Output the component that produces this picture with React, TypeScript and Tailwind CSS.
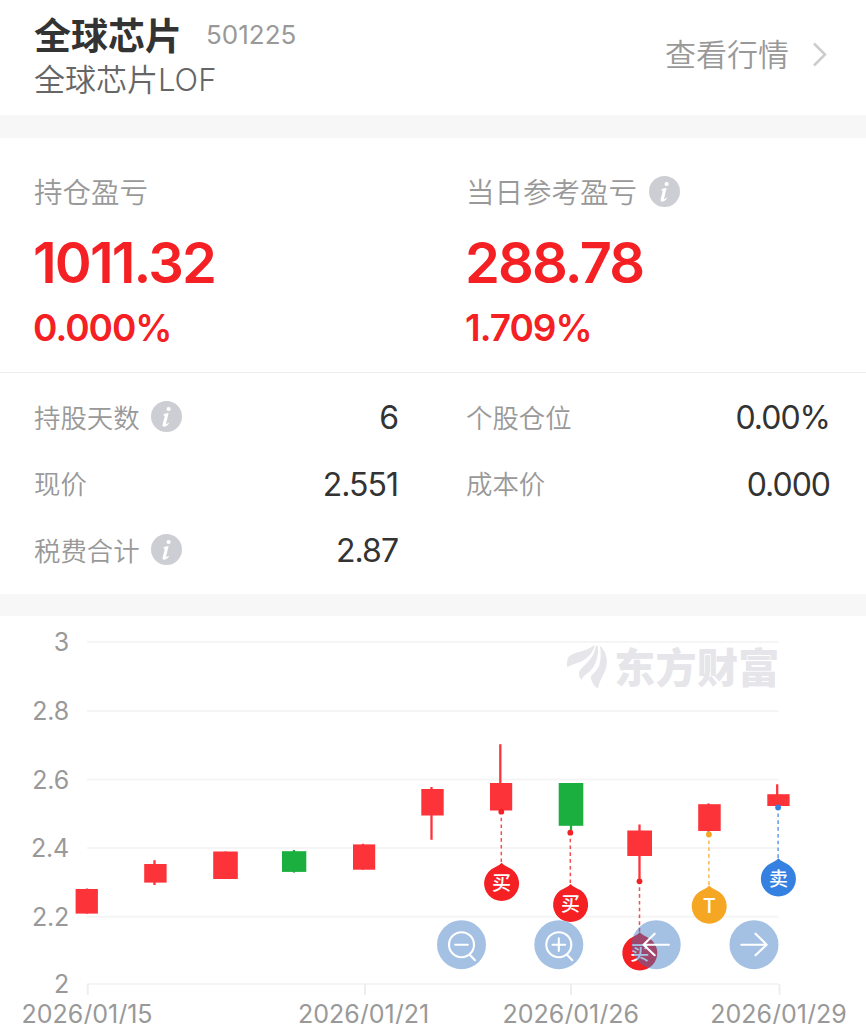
import type { ReactNode } from "react";

const RED = "#fd333a";
const GREEN = "#1aaf3f";

function InfoIcon() {
  return (
    <svg className="h-[31px] w-[31px] shrink-0" viewBox="0 0 31 31">
      <circle cx="15.5" cy="15.5" r="15.5" fill="#cdced3" />
      <circle cx="17.6" cy="8" r="2.1" fill="#fff" />
      <path
        d="M12.3 13.6C13.6 12.8 15.3 12.1 17.6 11.9L15.1 22.4C14.9 23.3 15.4 23.3 17.5 21.7L18 22.4C16.2 24.5 14.5 25.7 13.1 25.7C11.7 25.7 11.3 24.6 11.7 23L13.7 15.2C13.9 14.4 13.5 14.3 12.5 14.5Z"
        fill="#fff"
      />
    </svg>
  );
}

function Row({ label, info, value }: { label: string; info?: boolean; value?: string }) {
  return (
    <div className="flex h-[66.500px] items-center justify-between">
      <div className="flex items-center gap-[11px]">
        <span className="pt-[2px] text-[26.400px] leading-none font-[350] text-[#999]">{label}</span>
        {info && <InfoIcon />}
      </div>
      <span className="pt-[2.500px] text-[32px] leading-none tracking-[-1px] text-[#333]">{value}</span>
    </div>
  );
}

function Stat({ label, info, value, percent }: { label: string; info?: boolean; value: string; percent: string }) {
  return (
    <div className="flex flex-col items-start">
      <div className="flex h-[32px] items-center gap-[12px]">
        <span className="pt-[4px] text-[28.500px] leading-none font-[350] text-[#999]">{label}</span>
        {info && <InfoIcon />}
      </div>
      <div className="-ml-[1px] mt-[25px] text-[56px] leading-[60px] font-semibold tracking-[-1.850px]">{value}</div>
      <div className="-ml-[1px] mt-[13px] text-[37px] leading-[44px] font-semibold tracking-[-1px]">{percent}</div>
    </div>
  );
}

type Candle = { x: number; w: number; top: number; bottom: number; cx: number; high: number; low: number; up: boolean };

const candles: Candle[] = [
  { x: 75.6, w: 22.3, top: 889, bottom: 913.6, cx: 87, high: 888.5, low: 913.6, up: true },
  { x: 144.2, w: 22.4, top: 864, bottom: 882.6, cx: 154.5, high: 860.2, low: 885, up: true },
  { x: 213.2, w: 24.6, top: 851.5, bottom: 879, cx: 225.5, high: 851.5, low: 879, up: true },
  { x: 282, w: 24.3, top: 851.2, bottom: 871.9, cx: 294, high: 850, low: 872.6, up: false },
  { x: 353, w: 22.2, top: 844.4, bottom: 869.7, cx: 363, high: 843.8, low: 869.7, up: true },
  { x: 421.3, w: 22.4, top: 789, bottom: 815.5, cx: 431.5, high: 787, low: 839.8, up: true },
  { x: 490, w: 22.2, top: 783, bottom: 810.5, cx: 500.3, high: 744.2, low: 810.5, up: true },
  { x: 558.7, w: 24.6, top: 783, bottom: 825.8, cx: 571, high: 783, low: 830.5, up: false },
  { x: 627.3, w: 24.7, top: 830.5, bottom: 856, cx: 639.5, high: 824.5, low: 881, up: true },
  { x: 698.2, w: 22.5, top: 804.2, bottom: 831, cx: 708.5, high: 803.4, low: 831.8, up: true },
  { x: 767.3, w: 22.3, top: 794.2, bottom: 806, cx: 777.2, high: 784.3, low: 806, up: true },
];

const pins = [
  { x: 501.6, dot: 811.7, cy: 882.8, label: "买", size: 19, color: "#f42024" },
  { x: 570.6, dot: 832.7, cy: 903.9, label: "买", size: 19, color: "#f42024" },
  { x: 639.8, dot: 881.3, cy: 952.3, label: "买", size: 19, color: "#f42024" },
  { x: 709.2, dot: 834.5, cy: 905.5, label: "T", size: 20, color: "#f5a623" },
  { x: 778.4, dot: 807.5, cy: 878.2, label: "卖", size: 19, color: "#3581e2" },
];

const levels = [
  { y: 642, label: "3" },
  { y: 711, label: "2.8" },
  { y: 779.5, label: "2.6" },
  { y: 848, label: "2.4" },
  { y: 916.7, label: "2.2" },
  { y: 984, label: "2" },
];

const dates = [
  { tick: 87.7, x: 87, label: "2026/01/15" },
  { tick: 365, x: 363.5, label: "2026/01/21" },
  { tick: 571, x: 570.8, label: "2026/01/26" },
  { tick: 779.5, x: 778.5, label: "2026/01/29" },
];

function RoundButton({ x, children }: { x: number; children: ReactNode }) {
  return (
    <g transform={`translate(${x} 944.7)`} fill="none" stroke="#fff" strokeWidth="2.1" strokeLinecap="round" strokeLinejoin="round">
      <circle r="24.5" fill="#3676c4" fillOpacity="0.45" stroke="none" />
      {children}
    </g>
  );
}

function Chart() {
  return (
    <svg className="block h-[408px] w-[866px]" viewBox="0 616 866 408">
      {levels.map((l) => (
        <g key={l.label}>
          <path d={`M87 ${l.y}H778.5`} stroke="#f5f5f5" strokeWidth="2" />
          <text x="69" y={l.y + 9} textAnchor="end" fontSize="25" letterSpacing="-0.2" fill="#999">
            {l.label}
          </text>
        </g>
      ))}
      {dates.map((d) => (
        <g key={d.label}>
          <path d={`M${d.tick} 984V995`} stroke="#eeeeee" strokeWidth="2" />
          <text x={d.x} y="1023.3" textAnchor="middle" fontSize="25" fill="#999">
            {d.label}
          </text>
        </g>
      ))}

      <g fill="#e5e5ea">
        <path d="M567.3 667.5C566.8 663.5 567 659.5 568.3 657.3C573 651.5 585 652.5 594.5 645C593.5 652.5 587 659 580 662C575 664 570.5 664.5 567.3 667.5Z" />
        <path d="M581.5 680C579.5 678 578.7 675 579 672.3C581.5 666 594 660.5 595.7 646L597.5 645.7C598.8 652 597.5 661 592.7 668C589 673.5 583.5 674.5 581.5 680Z" />
        <path d="M599.8 645.7C604.5 649.5 607 656 606.9 662C606.5 673 600 677 598 688.5C594.5 686.5 591.5 682 590.7 677C592.5 673 597.5 671.5 599.5 664.5C601.3 658 601 651 599.8 645.7Z" />
        <text x="614.3" y="683" fontSize="41" fontWeight="900" letterSpacing="0.3">
          东方财富
        </text>
      </g>

      {candles.map((c) => {
        const color = c.up ? RED : GREEN;
        return (
          <g key={c.x} fill={color}>
            <path d={`M${c.cx} ${c.high}V${c.low}`} stroke={color} strokeWidth="2.3" />
            <rect x={c.x} y={c.top} width={c.w} height={c.bottom - c.top} />
          </g>
        );
      })}

      {pins.map((p) => (
        <g key={p.x}>
          <path d={`M${p.x - 0.3} ${p.dot + 6}V${p.cy - 20}`} stroke={p.color} strokeWidth="1.5" strokeDasharray="3.6 3.2" strokeOpacity="0.8" />
          <circle cx={p.x - 0.3} cy={p.dot} r="2.9" fill={p.color} />
          <g transform={`translate(${p.x} ${p.cy})`}>
            <path d="M0 -20C2.5 -17 6.5 -15.7 10.5 -13.3A17.5 17.5 0 1 1 -10.5 -13.3C-6.5 -15.7 -2.5 -17 0 -20Z" fill={p.color} />
            <text y="7.5" textAnchor="middle" fontSize={p.size} fontWeight="500" fill="#fff">
              {p.label}
            </text>
          </g>
        </g>
      ))}

      <RoundButton x={461.5}>
        <circle r="12.5" />
        <path d="M-6.3 0H6.3M8.2 10L13.5 15.5" />
      </RoundButton>
      <RoundButton x={558.8}>
        <circle r="12.5" />
        <path d="M-6.3 0H6.3M0 -6.3V6.3M8.2 10L13.5 15.5" />
      </RoundButton>
      <RoundButton x={656.2}>
        <path d="M12.7 0H-12.7M-1.5 -11L-12.7 0L-1.5 10.5" />
      </RoundButton>
      <RoundButton x={754}>
        <path d="M-12.7 0H12.7M1.5 -11L12.7 0L1.5 10.5" />
      </RoundButton>
    </svg>
  );
}

export default function App() {
  return (
    <main className="h-[1024px] w-[866px] overflow-hidden bg-white font-[Inter,'Noto_Sans_CJK_SC',sans-serif]">
      <header className="flex h-[115px] items-start justify-between pr-[39px] pl-[34px]">
        <div className="flex flex-col pt-[14px]">
          <div className="flex items-center gap-[25px]">
            <h1 className="pt-[3px] text-[37px] leading-[39px] font-bold text-[#333]">全球芯片</h1>
            <span className="-ml-[1px] text-[26px] leading-[42px] font-[380] text-[#999]">501225</span>
          </div>
          <span className="mt-[5px] text-[31px] leading-[38px] font-[350] text-[#666]">全球芯片LOF</span>
        </div>
        <div className="flex items-center gap-[24px] pt-[34px] text-[#999]">
          <span className="pt-[2px] text-[31px] leading-[38px] font-[350]">查看行情</span>
          <svg className="h-[26px] w-[14px]" viewBox="0 0 14 26" fill="none" stroke="#ccc" strokeWidth="2.5">
            <path d="M1 2.5L12 13.5L1 24.5" />
          </svg>
        </div>
      </header>
      <div className="h-[22.500px] bg-[#f7f7f7]" />
      <section className="grid h-[235px] grid-cols-2 border-b border-[#eee] pt-[38px] text-[#f42024]">
        <div className="pl-[34px]">
          <Stat label="持仓盈亏" value="1011.32" percent="0.000%" />
        </div>
        <div className="pl-[33px]">
          <Stat label="当日参考盈亏" info value="288.78" percent="1.709%" />
        </div>
      </section>
      <section className="grid h-[221.500px] grid-cols-2 pt-[11px]">
        <div className="pr-[35px] pl-[34px]">
          <Row label="持股天数" info value="6" />
          <Row label="现价" value="2.551" />
          <Row label="税费合计" info value="2.87" />
        </div>
        <div className="pr-[36px] pl-[33px]">
          <Row label="个股仓位" value="0.00%" />
          <Row label="成本价" value="0.000" />
        </div>
      </section>
      <div className="h-[22px] bg-[#f7f7f7]" />
      <Chart />
    </main>
  );
}
